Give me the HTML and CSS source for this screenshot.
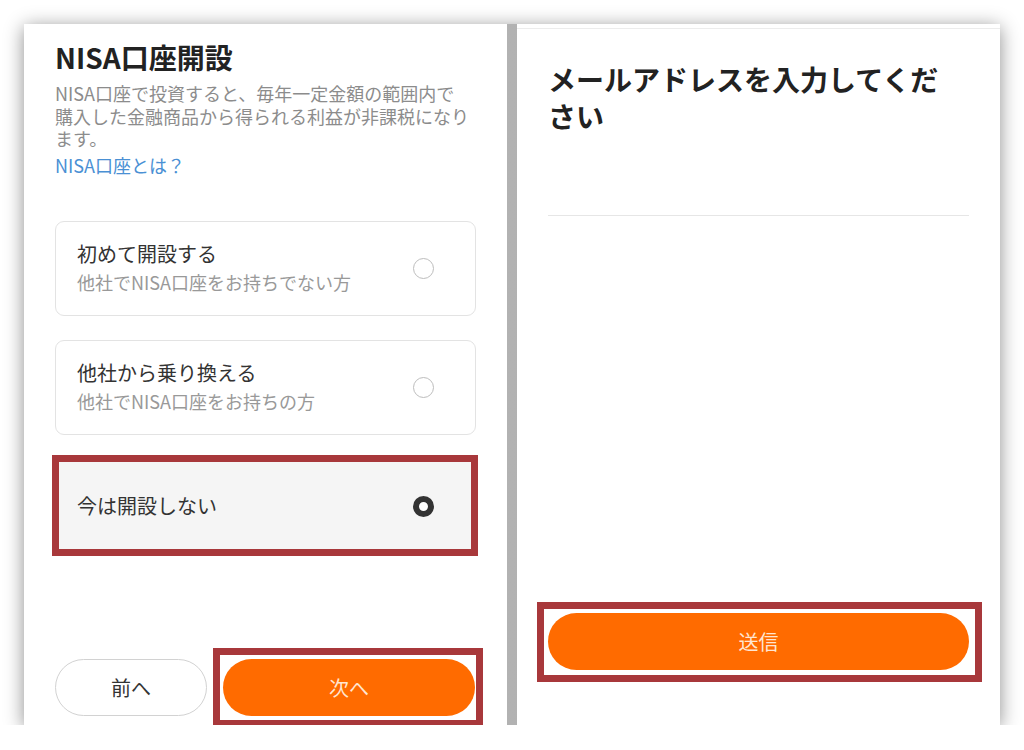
FILE: index.html
```html
<!DOCTYPE html>
<html lang="ja">
<head>
<meta charset="utf-8">
<title>NISA口座開設</title>
<link rel="stylesheet" href="styles.css">
</head>
<body>
<div class="sheet">
  <section class="panel panel-left">
    <h1 class="title">NISA口座開設</h1>
    <p class="desc">NISA口座で投資すると、毎年一定金額の範囲内で購入した金融商品から得られる利益が非課税になります。</p>
    <a class="link" href="#">NISA口座とは？</a>

    <div class="options">
      <div class="option">
        <div class="option-text">
          <div class="option-title">初めて開設する</div>
          <div class="option-sub">他社でNISA口座をお持ちでない方</div>
        </div>
        <span class="radio"></span>
      </div>
      <div class="option">
        <div class="option-text">
          <div class="option-title">他社から乗り換える</div>
          <div class="option-sub">他社でNISA口座をお持ちの方</div>
        </div>
        <span class="radio"></span>
      </div>
      <div class="option option-selected">
        <div class="option-text">
          <div class="option-title">今は開設しない</div>
        </div>
        <span class="radio radio-on"></span>
      </div>
    </div>

    <div class="actions">
      <button class="btn btn-outline btn-prev">前へ</button>
      <span class="marked mark-next"><button class="btn btn-primary btn-next">次へ</button></span>
    </div>
  </section>

  <section class="panel panel-right">
    <div class="topline"></div>
    <h2 class="title title-email">メールアドレスを入力してください</h2>
    <div class="email-field"></div>
    <div class="spacer"></div>
    <span class="marked mark-send"><button class="btn btn-primary btn-send">送信</button></span>
  </section>
</div>
</body>
</html>
```

FILE: styles.css
```css
* {
  box-sizing: border-box;
}

html, body {
  margin: 0;
  padding: 0;
  background: #ffffff;
}

body {
  font-family: "Noto Sans CJK JP", "Noto Sans", sans-serif;
  color: #333;
}

.sheet {
  display: flex;
  gap: 10px;
  width: 976px;
  height: 701px;
  margin: 24px 0 0 24px;
  background: linear-gradient(to right, #999999, #b2b2b2 50%, #999999);
  box-shadow: 0 3px 18px rgba(0, 0, 0, 0.45);
}

.panel {
  width: 483px;
  height: 100%;
  background: #fff;
  display: flex;
  flex-direction: column;
  padding: 0 31px;
}

/* ---------- left ---------- */
.panel-left {
  padding-top: 15px;
  padding-bottom: 9px;
}

.title {
  margin: 0;
  font-size: 28px;
  line-height: 36px;
  font-weight: 700;
  color: #222;
}

.desc {
  margin: 7px 0 0;
  width: 416px;
  font-size: 18px;
  line-height: 22.5px;
  color: #8c8c8c;
}

.link {
  margin-top: 4px;
  font-size: 18px;
  line-height: 22px;
  color: #4a90d4;
  text-decoration: none;
  align-self: flex-start;
}

.options {
  display: flex;
  flex-direction: column;
  gap: 24px;
  margin-top: 45px;
}

.option {
  height: 95px;
  border: 1.5px solid #e3e3e3;
  border-radius: 9px;
  display: flex;
  align-items: center;
  justify-content: space-between;
  padding: 0 41px 0 21px;
  background: #fff;
}

.option-selected {
  position: relative;
  background: #f5f5f5;
  border-radius: 0;
}

.option-selected::after {
  content: "";
  position: absolute;
  top: -4.5px;
  left: -4.5px;
  right: -2.5px;
  bottom: -3.5px;
  border: 7px solid #a8383b;
  pointer-events: none;
}

.option-text {
  display: flex;
  flex-direction: column;
}

.option-title {
  font-size: 20px;
  line-height: 28px;
  color: #333;
}

.option-sub {
  font-size: 18px;
  line-height: 28px;
  color: #999;
}

.radio {
  width: 21px;
  height: 21px;
  border-radius: 50%;
  border: 1.5px solid #bdbdbd;
  flex: none;
}

.radio-on {
  border: 6.5px solid #333;
  background: #fff;
}

.actions {
  margin-top: auto;
  display: flex;
  gap: 16px;
}

.btn {
  height: 57px;
  border-radius: 29px;
  font-family: inherit;
  font-size: 20px;
  padding: 0;
  cursor: pointer;
}

.btn-outline {
  width: 152px;
  background: #fff;
  border: 1.5px solid #d2d2d2;
  color: #333;
}

.btn-primary {
  background: #ff6b00;
  border: none;
  color: #ffe6d2;
}

.btn-next {
  width: 252px;
  display: block;
}

/* ---------- annotation frames ---------- */
.marked {
  position: relative;
  display: block;
}

.marked::after {
  content: "";
  position: absolute;
  border: 7px solid #a8383b;
  pointer-events: none;
}

.mark-next::after {
  top: -11px;
  left: -10px;
  right: -8px;
  bottom: -11px;
}

.mark-send::after {
  top: -11px;
  left: -11px;
  right: -13px;
  bottom: -12px;
}

/* ---------- right ---------- */
.panel-right {
  padding-top: 4px;
  padding-bottom: 55px;
}

.topline {
  height: 1px;
  margin: 0 -31px;
  background: #ececec;
}

.title-email {
  margin-top: 32px;
  font-size: 28px;
  line-height: 37px;
  padding-right: 20px;
  color: #222;
}

.email-field {
  height: 81px;
  border-bottom: 1px solid #e6e6e6;
}

.spacer {
  flex: 1;
}

.btn-send {
  width: 421px;
  display: block;
}
```
